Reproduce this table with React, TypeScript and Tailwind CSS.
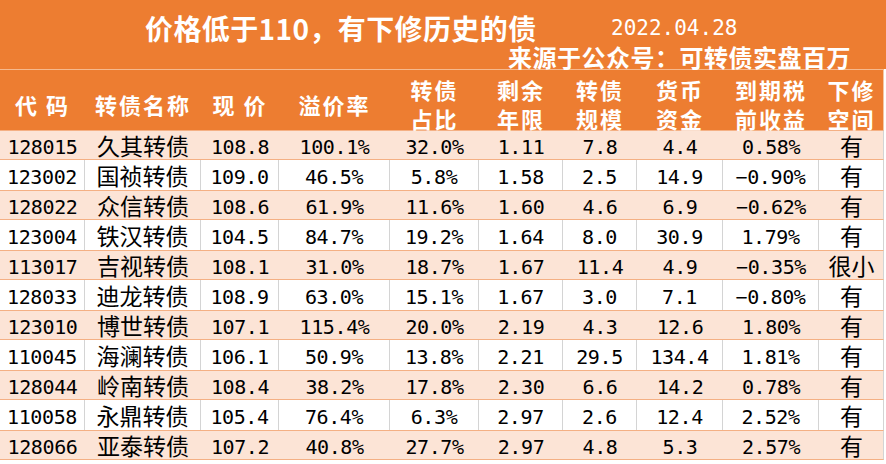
const rows: string[][] = [
  ['128015', '久其转债', '108.8', '100.1%', '32.0%', '1.11', '7.8', '4.4', '0.58%', '有'],
  ['123002', '国祯转债', '109.0', '46.5%', '5.8%', '1.58', '2.5', '14.9', '−0.90%', '有'],
  ['128022', '众信转债', '108.6', '61.9%', '11.6%', '1.60', '4.6', '6.9', '−0.62%', '有'],
  ['123004', '铁汉转债', '104.5', '84.7%', '19.2%', '1.64', '8.0', '30.9', '1.79%', '有'],
  ['113017', '吉视转债', '108.1', '31.0%', '18.7%', '1.67', '11.4', '4.9', '−0.35%', '很小'],
  ['128033', '迪龙转债', '108.9', '63.0%', '15.1%', '1.67', '3.0', '7.1', '−0.80%', '有'],
  ['123010', '博世转债', '107.1', '115.4%', '20.0%', '2.19', '4.3', '12.6', '1.80%', '有'],
  ['110045', '海澜转债', '106.1', '50.9%', '13.8%', '2.21', '29.5', '134.4', '1.81%', '有'],
  ['128044', '岭南转债', '108.4', '38.2%', '17.8%', '2.30', '6.6', '14.2', '0.78%', '有'],
  ['110058', '永鼎转债', '105.4', '76.4%', '6.3%', '2.97', '2.6', '12.4', '2.52%', '有'],
  ['128066', '亚泰转债', '107.2', '40.8%', '27.7%', '2.97', '4.8', '5.3', '2.57%', '有'],
];

const headers: string[][] = [
  ['代 码'],
  ['转债名称'],
  ['现 价'],
  ['溢价率'],
  ['转债', '占比'],
  ['剩余', '年限'],
  ['转债', '规模'],
  ['货币', '资金'],
  ['到期税', '前收益'],
  ['下修', '空间'],
];

const cjk = "font-['Noto_Sans_CJK_SC',sans-serif]";
const mono = "font-['DejaVu_Sans_Mono','Noto_Sans_CJK_SC',monospace]";
const cols = 'grid grid-cols-[85px_116px_78px_111px_89px_84px_74px_86px_96px_65px]';

export default function App() {
  return (
    <div className="w-[886px] h-[464px] bg-white overflow-hidden">
      {/* title */}
      <div className="h-[69px] bg-[#ED7D31] text-white">
        <div className="flex pt-[12px] pl-[145px] items-center h-[44px]">
          <div className={`w-[466px] text-[28px] font-bold leading-[32px] tracking-[0.4px] ${cjk}`}>
            价格低于110，有下修历史的债
          </div>
          <div className={`text-[21px] leading-[32px] ${mono}`}>2022.04.28</div>
        </div>
        <div className={`pl-[508px] mt-[1px] text-[24px] font-bold leading-[24px] tracking-[0.5px] ${cjk}`}>
          来源于公众号：可转债实盘百万
        </div>
      </div>
      <div className="h-px w-[884px] bg-[#F6B98E]" />

      {/* column headers */}
      <div className={`${cols} h-[60px] bg-[#ED7D31] w-[884px] border-r border-[#F2C7A6]`}>
        {headers.map((h, i) => (
          <div
            key={i}
            className={`flex flex-col items-center justify-center pt-[5px] text-white font-bold text-[22px] leading-[29px] tracking-[2px] ${cjk}`}
          >
            {h.map((line) => (
              <span key={line}>{line}</span>
            ))}
          </div>
        ))}
      </div>

      {/* rows */}
      {rows.map((r, ri) => {
        const peach = ri % 2 === 0;
        return (
          <div
            key={r[0]}
            className={`${cols} w-[884px] h-[30px] border-r border-[#D4D4D4] ${
              peach ? 'bg-[#FCE4D6] border-y border-y-[#F4B084]' : 'bg-white'
            }`}
          >
            {r.map((c, ci) => (
              <div
                key={ci}
                className={`flex items-center justify-center text-black ${
                  ci === 1 || ci === 9
                    ? `pb-[1px] text-[23px] leading-[24px] ${cjk}`
                    : `pt-[3px] text-[20px] leading-[24px] tracking-[-0.4px] ${mono}`
                } ${!peach && ci < 9 ? 'border-r border-[#D4D4D4]' : ''}`}
              >
                {c}
              </div>
            ))}
          </div>
        );
      })}
    </div>
  );
}
